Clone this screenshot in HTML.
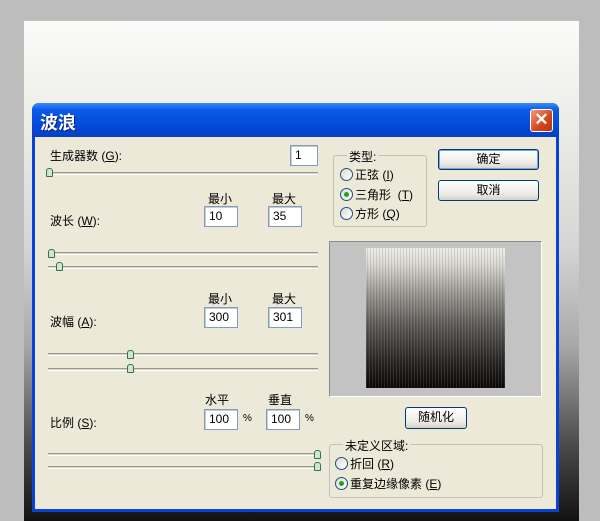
<!DOCTYPE html>
<html><head><meta charset="utf-8"><style>
*{margin:0;padding:0;box-sizing:border-box}
body{width:600px;height:521px;overflow:hidden;background:#bdbdbd;position:relative;font-family:"Liberation Sans","Noto Sans CJK SC",sans-serif;font-size:12px;color:#000}
.a{position:absolute}
#panel{left:24px;top:21px;width:555px;height:500px;background:linear-gradient(#fbfbf9 0%,#ecece8 20%,#d6d6d6 45%,#a8a8a8 65%,#4a4a4a 85%,#111 100%)}
#dlg{left:32px;top:103px;width:527px;height:409px;background:#0843d4;border-radius:7px 7px 0 0}
#title{left:0;top:0;width:527px;height:34px;border-radius:7px 7px 0 0;background:linear-gradient(#3b8cf5 0%,#0a5ae8 20%,#0449d8 70%,#0640c0 100%)}
#title span{position:absolute;left:8px;top:6px;color:#fff;font-size:18px;font-weight:bold;text-shadow:1px 1px #0a1f78}
#close{left:498px;top:6px;width:23px;height:23px;border:1px solid #fff;border-radius:3px;background:linear-gradient(135deg,#f09a7a,#d3461c 60%,#b83210);color:#fff;font-size:17px;font-weight:bold;text-align:center;line-height:20px}
#body{left:3px;top:34px;width:521px;height:372px;background:#ece9d8}
.inp{position:absolute;height:21px;background:#fff;border:1px solid #7f9db9;box-shadow:inset 1px 1px #ccc;padding:2px 0 0 4px;font-size:12px}
.trk{position:absolute;height:3px;border-top:1px solid #9a9a90;border-bottom:1px solid #fff;background:#d6d3c4}
.th{position:absolute;width:7px;height:9px;background:#cfe6cf;border:1px solid #3b6e4a;border-radius:3px 3px 1px 1px}
.btn{position:absolute;border:1px solid #003c74;border-radius:3px;background:linear-gradient(#fff,#ecebe6 70%,#d6d0c5);text-align:center;font-size:12px;line-height:19px}
.grp{position:absolute;border:1px solid #c5c2b2;border-radius:3px}
.lg{position:absolute;background:#ece9d8;padding:0 2px}
.rd{position:absolute;width:13px;height:13px;border:1px solid #1c5180;border-radius:50%;background:linear-gradient(135deg,#dcdcd4,#fff)}
.rd.on::after{content:"";position:absolute;left:3px;top:3px;width:5px;height:5px;border-radius:50%;background:#21a121}
</style></head><body>
<div class="a" id="panel"></div>
<div class="a" id="dlg">
 <div class="a" id="title"><span>波浪</span></div>
 <div class="a" id="close">✕</div>
 <div class="a" id="body"></div>
</div>
<div class="a" style="left:50px;top:147px">生成器数 (<u>G</u>):</div>
<div class="inp" style="left:290px;top:145px;width:28px">1</div>
<div class="trk" style="left:48px;top:172px;width:270px"></div>
<div class="th" style="left:46px;top:168px"></div>

<div class="a" style="left:208px;top:190px">最小</div>
<div class="a" style="left:272px;top:190px">最大</div>
<div class="a" style="left:50px;top:212px">波长 (<u>W</u>):</div>
<div class="inp" style="left:204px;top:206px;width:34px">10</div>
<div class="inp" style="left:268px;top:206px;width:34px">35</div>
<div class="trk" style="left:48px;top:252px;width:270px"></div>
<div class="th" style="left:48px;top:249px"></div>
<div class="trk" style="left:48px;top:266px;width:270px"></div>
<div class="th" style="left:56px;top:262px"></div>

<div class="a" style="left:208px;top:290px">最小</div>
<div class="a" style="left:272px;top:290px">最大</div>
<div class="a" style="left:50px;top:313px">波幅 (<u>A</u>):</div>
<div class="inp" style="left:204px;top:307px;width:34px">300</div>
<div class="inp" style="left:268px;top:307px;width:34px">301</div>
<div class="trk" style="left:48px;top:353px;width:270px"></div>
<div class="th" style="left:127px;top:350px"></div>
<div class="trk" style="left:48px;top:368px;width:270px"></div>
<div class="th" style="left:127px;top:364px"></div>

<div class="a" style="left:205px;top:391px">水平</div>
<div class="a" style="left:268px;top:391px">垂直</div>
<div class="a" style="left:50px;top:414px">比例 (<u>S</u>):</div>
<div class="inp" style="left:204px;top:409px;width:34px">100</div>
<div class="a" style="left:243px;top:413px;font-size:10px">%</div>
<div class="inp" style="left:266px;top:409px;width:34px">100</div>
<div class="a" style="left:305px;top:413px;font-size:10px">%</div>
<div class="trk" style="left:48px;top:453px;width:270px"></div>
<div class="th" style="left:314px;top:450px"></div>
<div class="trk" style="left:48px;top:466px;width:270px"></div>
<div class="th" style="left:314px;top:462px"></div>

<div class="grp" style="left:333px;top:155px;width:94px;height:72px"></div>
<div class="lg" style="left:347px;top:148px">类型:</div>
<div class="rd" style="left:340px;top:168px"></div><div class="a" style="left:355px;top:166px">正弦 (<u>I</u>)</div>
<div class="rd on" style="left:340px;top:188px"></div><div class="a" style="left:355px;top:186px">三角形 &nbsp;(<u>T</u>)</div>
<div class="rd" style="left:340px;top:207px"></div><div class="a" style="left:355px;top:205px">方形 (<u>Q</u>)</div>

<div class="btn" style="left:438px;top:149px;width:101px;height:21px;box-shadow:inset 0 0 0 1px #7ca0e0">确定</div>
<div class="btn" style="left:438px;top:180px;width:101px;height:21px">取消</div>

<div class="a" style="left:329px;top:241px;width:213px;height:156px;background:#c3c3c3;border:1px solid #8a8a86;border-right-color:#fff;border-bottom-color:#fff"></div>
<div class="a" style="left:366px;top:248px;width:139px;height:140px;background:repeating-linear-gradient(90deg,rgba(255,255,255,.1) 0 1px,rgba(0,0,0,.1) 1px 2px,transparent 2px 3px),linear-gradient(#ecece6 0%,#d8d6d0 12%,#9a9892 32%,#5c5a56 55%,#2a2826 80%,#0a0806 100%)"></div>

<div class="btn" style="left:405px;top:407px;width:62px;height:22px">随机化</div>

<div class="grp" style="left:329px;top:444px;width:214px;height:54px"></div>
<div class="lg" style="left:343px;top:437px">未定义区域:</div>
<div class="rd" style="left:335px;top:457px"></div><div class="a" style="left:350px;top:455px">折回 (<u>R</u>)</div>
<div class="rd on" style="left:335px;top:477px"></div><div class="a" style="left:350px;top:475px">重复边缘像素 (<u>E</u>)</div>
</body></html>
